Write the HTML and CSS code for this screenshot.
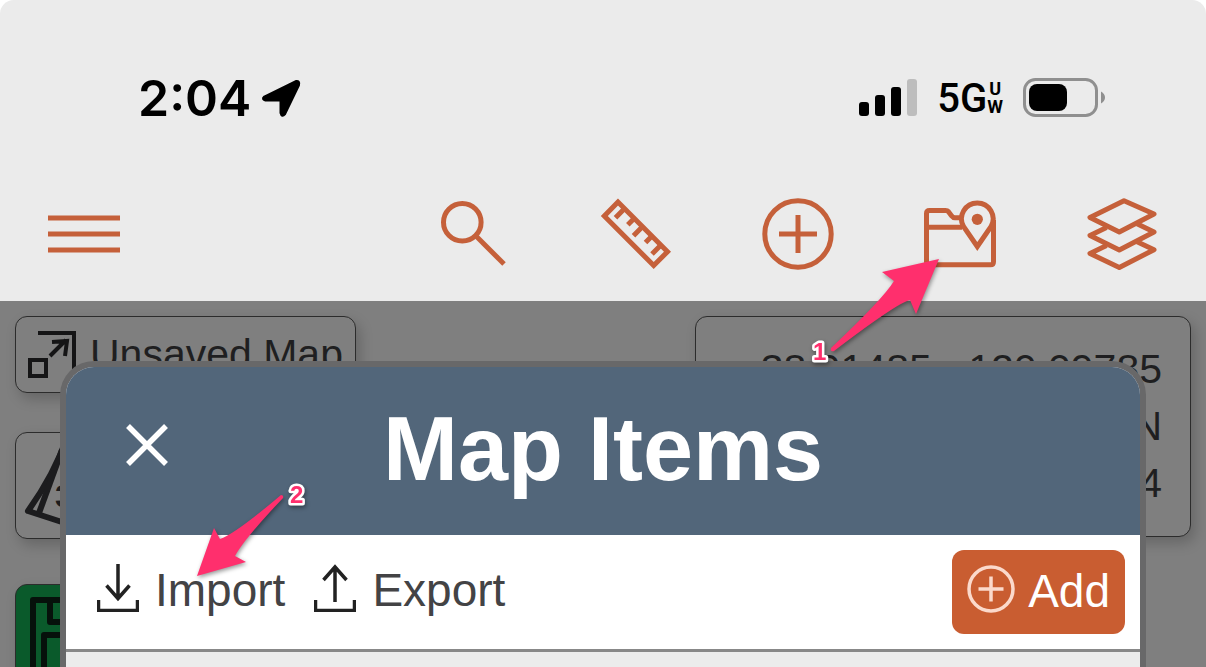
FILE: index.html
```html
<!DOCTYPE html>
<html lang="en">
<head>
    <meta charset="UTF-8">
    <meta name="viewport" content="width=device-width, initial-scale=1.0">
    <title>Map Items</title>
    <link rel="stylesheet" href="styles.css">
</head>
<body>
<div class="app">

    <!-- Phone status bar and main toolbar -->
    <header class="top">
        <div class="status-bar">
            <div class="status-left">
                <span class="time">2:04</span>
                <svg class="location" viewBox="0 0 40 40" width="40" height="40">
                    <path d="M3.500 19L35 3.500q3.500-.5 2.500 3.500L23.500 36q-2.500 3-3.500-1V22H4.500q-3.500-1-1-3z" fill="#000" stroke="#000" stroke-width="3" stroke-linejoin="round"/>
                </svg>
            </div>
            <div class="status-right">
                <svg viewBox="0 0 58 38" width="58" height="38">
                    <rect x="0" y="23" width="10" height="14" rx="3"/>
                    <rect x="16" y="16" width="10" height="21" rx="3"/>
                    <rect x="32" y="8" width="10" height="29" rx="3"/>
                    <rect x="48" y="0" width="10" height="37" rx="3" fill="#bdbdbd"/>
                </svg>
                <div class="network">
                    <span class="network-type">5G</span>
                    <span class="network-sub"><span>U</span><span>W</span></span>
                </div>
                <svg viewBox="0 0 82 40" width="82" height="40">
                    <rect x="1.500" y="1.500" width="72" height="36" rx="11" fill="none" stroke="#8f8f8f" stroke-width="3"/>
                    <rect x="6" y="6" width="38" height="27" rx="8"/>
                    <path d="M78 13.500q4 2.500 4 6t-4 6z" fill="#8f8f8f"/>
                </svg>
            </div>
        </div>

        <nav class="toolbar">
            <button class="tool menu" aria-label="Menu">
                <svg viewBox="0 0 72 72"><path d="M0 20h72M0 36h72M0 52h72"/></svg>
            </button>
            <button class="tool" aria-label="Search">
                <svg viewBox="0 0 72 72"><circle cx="24.300" cy="24.300" r="18.800"/><path d="M38 38l28 28"/></svg>
            </button>
            <button class="tool" aria-label="Measure">
                <svg viewBox="0 0 72 72">
                    <path d="M18 4L4.300 18 53.700 67.500 67.500 53.700z"/>
                    <path d="M24.600 10.600L15.500 19.800M34.300 20.300l-6.500 6.500M42.600 28.600L33.500 37.700M52 38l-6.500 6.500M61 47l-9 9"/>
                </svg>
            </button>
            <button class="tool" aria-label="Add item">
                <svg viewBox="0 0 72 72"><circle cx="36" cy="36" r="33.200"/><path d="M17 36h38M36 17v38"/></svg>
            </button>
            <button class="tool" aria-label="Map items">
                <svg viewBox="0 0 72 72">
                    <path d="M37 19.700H31q-2 0-3.500-2l-3-4q-1-1.200-3-1.200H5.500q-3 0-3 3v48.300q0 3 3 3h61q3 0 3-3V22"/>
                    <path d="M2.500 29.200H38"/>
                    <path d="M53.300 48.500L39.500 28.500A15.800 15.800 0 1 1 67.100 28.500z"/>
                    <circle class="dot" cx="53.300" cy="21.300" r="5.600"/>
                </svg>
            </button>
            <button class="tool" aria-label="Layers">
                <svg viewBox="0 0 72 72" stroke-linejoin="round">
                    <path d="M38 2.700L4 19.500 33.300 34 68 16z"/>
                    <path d="M20.500 29.500L4 37.500 33.300 52 68 34 50.500 25.500"/>
                    <path d="M20.500 47.500L4 55.500 33.300 69.500 68 51.700 50.500 43.500"/>
                </svg>
            </button>
        </nav>
    </header>

    <!-- Map behind the dialog, dimmed -->
    <main class="map">
        <div class="map-left">
            <button class="card map-name">
                <svg viewBox="0 0 48 48" width="48" height="48" fill="none" stroke="#151516" stroke-width="4">
                    <path d="M10 2h36v36"/>
                    <rect x="2" y="29" width="16" height="16"/>
                    <path d="M22 25L38 9M24 11l15-1-2 15"/>
                </svg>
                <span>Unsaved Map</span>
            </button>
            <button class="card view-3d" aria-label="3D view">
                <svg viewBox="0 0 105 105" width="105" height="105" fill="none" stroke="#1c1c1e" stroke-width="6" stroke-linejoin="round">
                    <path d="M52 2Q38 42 12 78L52 91 93 78Q66 42 52 2z"/>
                    <path d="M46 17L23 80"/>
                    <text x="39" y="74" class="label-3d">3D</text>
                </svg>
            </button>
            <button class="card layer-map" aria-label="Map layer">
                <svg viewBox="0 0 105 105" width="105" height="105" fill="none" stroke="#06110b" stroke-width="6" stroke-linejoin="round">
                    <path d="M17 105V15h70v90"/>
                    <path d="M34 15v22h53M28 105V50h59"/>
                </svg>
            </button>
        </div>
        <div class="card coords">
            <span>38.91485, -120.09785</span>
            <span>N</span>
            <span>4</span>
        </div>

        <!-- Map items dialog -->
        <section class="dialog" role="dialog" aria-labelledby="dialogTitle">
            <div class="dialog-header">
                <button class="close-btn" aria-label="Close">
                    <svg viewBox="0 0 42 42" width="42" height="42" fill="none" stroke="#fff" stroke-width="5.500"><path d="M2 2l38 38M40 2L2 40"/></svg>
                </button>
                <h1 id="dialogTitle">Map Items</h1>
            </div>
            <div class="dialog-actions">
                <button class="action">
                    <svg viewBox="0 0 42 48" width="42" height="48" fill="none" stroke="#222" stroke-width="3.500"><path d="M21 0v35M9.500 21.500L21 34.500 32.500 21.500"/><path d="M1.500 36v10.500h39V36"/></svg>
                    Import
                </button>
                <button class="action">
                    <svg viewBox="0 0 42 48" width="42" height="48" fill="none" stroke="#222" stroke-width="3.500"><path d="M21 38V3M9.500 16L21 3 32.500 16"/><path d="M1.500 36v10.500h39V36"/></svg>
                    Export
                </button>
                <button class="add-btn">
                    <svg viewBox="0 0 48 48" width="48" height="48" fill="none" stroke="#fbd9cb" stroke-width="3.500"><circle cx="24" cy="24" r="22"/><path d="M11.500 24h25M24 11.500v25"/></svg>
                    Add
                </button>
            </div>
            <div class="dialog-body"></div>
        </section>
    </main>

    <!-- Step markers -->
    <svg class="marker marker-1" viewBox="0 0 136 110" width="136" height="110">
        <path d="M134 2L77 15 89 24Q78 42 26 91q-1 4 3 3Q92 46 105 43L111 57z"/>
        <text x="8" y="103">1</text>
    </svg>
    <svg class="marker marker-2" viewBox="0 0 116 100" width="116" height="100">
        <path d="M2 96L19 48 25 59Q40 54 86 15q3 0 2 3Q50 58 40 76L51 82z"/>
        <text x="95" y="23">2</text>
    </svg>
</div>
</body>
</html>
```
FILE: styles.css
```css
* {
    box-sizing: border-box;
}

body {
    margin: 0;
    background-color: #fff;
    font-family: "Liberation Sans", Arial, sans-serif;
}

button {
    margin: 0;
    padding: 0;
    border: none;
    background: none;
    font-family: inherit;
    cursor: pointer;
}

svg {
    display: block;
    flex: none;
}

.app {
    position: relative;
    display: flex;
    flex-direction: column;
    height: 100vh;
    border-radius: 14px 14px 0 0;
    overflow: hidden;
}

/* Status bar */
.top {
    background-color: #ebebeb;
}

.status-bar {
    display: flex;
    justify-content: space-between;
    align-items: center;
    height: 132px;
    padding: 64px 101px 0 138px;
}

.status-left {
    display: flex;
    align-items: center;
    gap: 10px;
}

.time {
    font-family: Inter, sans-serif;
    font-size: 50px;
    font-weight: 600;
}

.status-right {
    display: flex;
    align-items: center;
    gap: 20px;
}

.network {
    display: flex;
    align-items: center;
    font-family: Roboto, sans-serif;
    font-weight: 500;
}

.network-type {
    font-size: 40px;
}

.network-sub {
    display: flex;
    flex-direction: column;
    align-items: center;
    font-size: 18px;
    line-height: 18px;
    font-weight: 700;
}

/* Toolbar */
.toolbar {
    display: flex;
    gap: 90px;
    padding: 66px 48px 31px;
}

.tool svg {
    width: 72px;
    height: 72px;
    fill: none;
    stroke: #c5603a;
    stroke-width: 5;
}

.tool .dot {
    fill: #c5603a;
    stroke: none;
}

.menu {
    margin-right: auto;
}

/* Map */
.map {
    position: relative;
    flex: 1;
    display: flex;
    justify-content: space-between;
    align-items: flex-start;
    padding: 15px;
    overflow: hidden;
    background-color: #7f7f7f;
}

.map-left {
    display: flex;
    flex-direction: column;
    align-items: flex-start;
    gap: 39px;
}

.card {
    border: 1px solid #2c2c2c;
    border-radius: 12px;
    background-color: #7f7f7f;
    box-shadow: 4px 6px 14px rgba(0, 0, 0, 0.2);
    color: #1f1f21;
    font-size: 41px;
}

.map-name {
    display: flex;
    align-items: center;
    gap: 14px;
    height: 77px;
    padding: 0 12px;
}

.label-3d {
    fill: #1c1c1e;
    stroke: none;
    font-size: 32px;
    font-weight: bold;
}

.layer-map {
    margin-top: 6px;
    background-color: #0a5a2b;
}

.coords {
    display: flex;
    flex-direction: column;
    align-items: flex-end;
    width: 496px;
    padding: 24px 28px;
    line-height: 57px;
}

/* Dialog */
.dialog {
    position: absolute;
    top: 60px;
    right: 60px;
    bottom: 0;
    left: 60px;
    display: flex;
    flex-direction: column;
    border: 6px solid #686869;
    border-bottom: none;
    border-radius: 34px 34px 0 0;
    overflow: hidden;
    background-color: #ececec;
}

.dialog-header {
    display: grid;
    grid-template-columns: 1fr auto 1fr;
    align-items: center;
    height: 168px;
    padding: 0 60px 4px;
    background-color: #52667a;
    color: #fff;
}

.close-btn {
    justify-self: start;
    padding-bottom: 8px;
}

.dialog-header h1 {
    margin: 0;
    font-size: 90px;
    line-height: 100px;
}

.dialog-actions {
    display: flex;
    align-items: center;
    gap: 29px;
    padding: 15px 15px 15px 31px;
    border-bottom: 3px solid #888;
    background-color: #fff;
}

.action,
.add-btn {
    display: flex;
    align-items: flex-start;
    gap: 16px;
    color: #434345;
    font-size: 46px;
    line-height: 52px;
}

.action {
    padding-bottom: 5px;
}

.add-btn {
    gap: 13px;
    height: 84px;
    margin-left: auto;
    padding: 15px;
    border-radius: 12px;
    background-color: #c95d31;
    color: #fff;
}

.dialog-body {
    flex: 1;
}

/* Step markers */
.marker {
    position: absolute;
    fill: #ff2f6d;
    filter: drop-shadow(1px 2px 2px rgba(0, 0, 0, 0.4));
    pointer-events: none;
}

.marker text {
    font-size: 24px;
    font-weight: bold;
    stroke: #fff;
    stroke-width: 5px;
    stroke-linejoin: round;
    paint-order: stroke;
}

.marker-1 {
    top: 257px;
    right: 265px;
}

.marker-2 {
    top: 480px;
    left: 195px;
}
```
